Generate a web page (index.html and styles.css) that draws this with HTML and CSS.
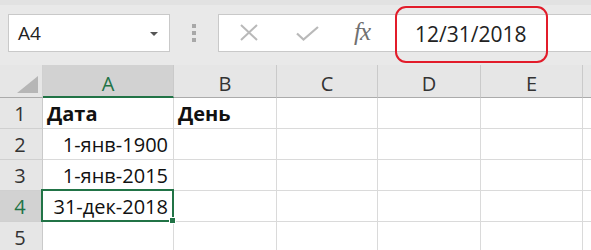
FILE: index.html
```html
<!DOCTYPE html>
<html lang="ru">

<head>
    <meta charset="UTF-8">
    <meta name="viewport" content="width=device-width, initial-scale=1.0">
    <title>Excel - дата</title>
    <link rel="stylesheet" href="styles.css">
</head>

<body>
    <div class="toolbar">
        <div class="name-box">
            <span class="name-text">A4</span>
            <span class="drop-arrow"></span>
        </div>
        <div class="grip">
            <span></span><span></span><span></span>
        </div>
        <div class="formula-box">
            <svg class="icon icon-cancel" width="20" height="18" viewBox="0 0 20 18">
                <path d="M2 1 L18 16 M18 1 L2 16" stroke="#b9b9b9" stroke-width="2" fill="none" />
            </svg>
            <svg class="icon icon-enter" width="24" height="16" viewBox="0 0 24 16">
                <path d="M1 7.5 L7.5 13.5 L22 1" stroke="#b9b9b9" stroke-width="2.2" fill="none" />
            </svg>
            <span class="fx">fx</span>
            <div class="formula-value">12/31/2018</div>
        </div>
    </div>

    <div class="sheet">
        <div class="corner">
            <svg width="21" height="17" viewBox="0 0 21 17">
                <polygon points="21,0 21,17 0,17" fill="#b6b6b6" />
            </svg>
        </div>
        <div class="col-head selected">A</div>
        <div class="col-head">B</div>
        <div class="col-head">C</div>
        <div class="col-head">D</div>
        <div class="col-head">E</div>
        <div class="col-head edge"></div>

        <div class="row-head">1</div>
        <div class="cell bold">Дата</div>
        <div class="cell bold">День</div>
        <div class="cell"></div>
        <div class="cell"></div>
        <div class="cell"></div>
        <div class="cell edge"></div>

        <div class="row-head">2</div>
        <div class="cell date">1-янв-1900</div>
        <div class="cell"></div>
        <div class="cell"></div>
        <div class="cell"></div>
        <div class="cell"></div>
        <div class="cell edge"></div>

        <div class="row-head">3</div>
        <div class="cell date">1-янв-2015</div>
        <div class="cell"></div>
        <div class="cell"></div>
        <div class="cell"></div>
        <div class="cell"></div>
        <div class="cell edge"></div>

        <div class="row-head selected">4</div>
        <div class="cell date active">31-дек-2018<span class="fill-handle"></span></div>
        <div class="cell"></div>
        <div class="cell"></div>
        <div class="cell"></div>
        <div class="cell"></div>
        <div class="cell edge"></div>

        <div class="row-head">5</div>
        <div class="cell"></div>
        <div class="cell"></div>
        <div class="cell"></div>
        <div class="cell"></div>
        <div class="cell"></div>
        <div class="cell edge"></div>
    </div>
</body>

</html>
```

FILE: styles.css
```css
body {
    margin: 0;
    font-family: "Open Sans", "Noto Sans", sans-serif;
    background-color: #fff;
    color: #1a1a1a;
    overflow: hidden;
}

/* formula bar */

.toolbar {
    height: 65px;
    background-color: #e9e9e9;
    border-top: 5px solid #e2e2e2;
    box-sizing: border-box;
    display: flex;
    align-items: flex-start;
    padding: 9px 0 0 8px;
}

.name-box {
    width: 162px;
    height: 38px;
    box-sizing: border-box;
    background-color: #fff;
    border: 1px solid #c9c9c9;
    display: flex;
    align-items: center;
    justify-content: space-between;
    padding: 0 11px 0 9px;
}

.name-text {
    font-size: 19px;
    color: #222;
}

.drop-arrow {
    width: 0;
    height: 0;
    border-left: 4px solid transparent;
    border-right: 4px solid transparent;
    border-top: 4px solid #555;
    margin-top: 2px;
}

.grip {
    width: 48px;
    height: 38px;
    display: flex;
    flex-direction: column;
    align-items: center;
    justify-content: center;
    gap: 3px;
}

.grip span {
    width: 4px;
    height: 4px;
    background-color: #a8a8a8;
}

.formula-box {
    flex: 1;
    height: 38px;
    box-sizing: border-box;
    background-color: #fff;
    border: 1px solid #c9c9c9;
    border-right: none;
    display: flex;
    align-items: center;
    position: relative;
}

.icon-cancel {
    margin-left: 20px;
}

.icon-enter {
    margin-left: 37px;
    margin-top: 2px;
}

.fx {
    font-family: "Liberation Serif", serif;
    font-style: italic;
    font-size: 25px;
    color: #707070;
    margin-left: 34px;
    margin-top: -3px;
    letter-spacing: -1px;
}

.formula-value {
    margin-left: 25px;
    font-size: 21px;
    color: #222;
    padding: 12px 19px 13px 18px;
    border: 2px solid #e21c2a;
    border-radius: 11px;
    margin-top: 2px;
}

/* grid */

.sheet {
    display: grid;
    grid-template-columns: 43px 131px 103px 101px 103px 102px 1fr;
    grid-template-rows: 33px repeat(5, 31px);
    font-size: 20px;
}

.corner {
    background-color: #e6e6e6;
    border-right: 1px solid #d0d0d0;
    border-bottom: 1px solid #ababab;
    display: flex;
    align-items: flex-end;
    justify-content: flex-end;
    padding: 0 4px 4px 0;
    box-sizing: border-box;
}

.col-head {
    background-color: #e6e6e6;
    border-right: 1px solid #cacaca;
    border-bottom: 1px solid #ababab;
    box-sizing: border-box;
    display: flex;
    align-items: center;
    justify-content: center;
    padding-top: 5px;
    color: #333;
}

.col-head.selected {
    background-color: #d2d2d2;
    color: #217346;
    border-bottom: 2px solid #217346;
    padding-top: 6px;
}

.col-head.edge,
.cell.edge {
    border-right: none;
}

.row-head {
    background-color: #e6e6e6;
    border-right: 1px solid #cacaca;
    border-bottom: 1px solid #d0d0d0;
    box-sizing: border-box;
    display: flex;
    align-items: center;
    justify-content: center;
    padding-right: 2px;
    color: #333;
}

.row-head.selected {
    background-color: #d2d2d2;
    color: #217346;
}

.cell {
    border-right: 1px solid #dadada;
    border-bottom: 1px solid #dadada;
    box-sizing: border-box;
    display: flex;
    align-items: center;
    padding: 0 4px;
    white-space: nowrap;
    color: #111;
}

.cell.bold {
    font-weight: bold;
}

.cell.date {
    justify-content: flex-end;
    padding-right: 5px;
}

.cell.active {
    position: relative;
}

.cell.active::after {
    content: "";
    position: absolute;
    top: -2px;
    left: -2px;
    right: -1px;
    bottom: -1px;
    border: 2px solid #217346;
}

.fill-handle {
    position: absolute;
    right: -3px;
    bottom: -3px;
    width: 5px;
    height: 5px;
    background-color: #217346;
    border: 1px solid #fff;
    z-index: 1;
}
```
